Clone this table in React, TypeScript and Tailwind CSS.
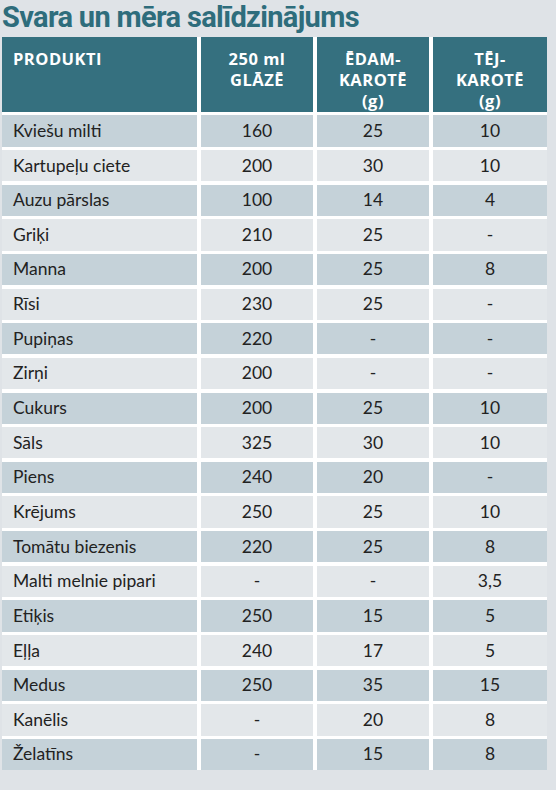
const rows: [string, string, string, string][] = [
  ['Kviešu milti', '160', '25', '10'],
  ['Kartupeļu ciete', '200', '30', '10'],
  ['Auzu pārslas', '100', '14', '4'],
  ['Griķi', '210', '25', '-'],
  ['Manna', '200', '25', '8'],
  ['Rīsi', '230', '25', '-'],
  ['Pupiņas', '220', '-', '-'],
  ['Zirņi', '200', '-', '-'],
  ['Cukurs', '200', '25', '10'],
  ['Sāls', '325', '30', '10'],
  ['Piens', '240', '20', '-'],
  ['Krējums', '250', '25', '10'],
  ['Tomātu biezenis', '220', '25', '8'],
  ['Malti melnie pipari', '-', '-', '3,5'],
  ['Etiķis', '250', '15', '5'],
  ['Eļļa', '240', '17', '5'],
  ['Medus', '250', '35', '15'],
  ['Kanēlis', '-', '20', '8'],
  ['Želatīns', '-', '15', '8'],
];

const head =
  "h-[75px] bg-[#35707f] text-white font-bold font-['Open_Sans',sans-serif] text-[16.5px] leading-[21px] tracking-[0.5px] pt-[11px]";

const App = () => {
  return (
    <div className="w-[556px] h-[790px] bg-[#dfe3e7] overflow-hidden">
      {/* Title */}
      <h1 className="h-[37px] pl-[2px] whitespace-nowrap text-[29px] leading-[35px] font-bold font-['Roboto',sans-serif] text-[#2e6d7c] tracking-[-0.65px]">
        Svara un mēra salīdzinājums
      </h1>

      {/* Table */}
      <div className="ml-[2px] w-[545px] grid grid-cols-[195px_112px_112px_114px] gap-x-[4px] gap-y-[3.4px] bg-white">
        <div className={`${head} pl-[11px]`}>PRODUKTI</div>
        <div className={`${head} text-center`}>
          250 ml
          <br />
          GLĀZĒ
        </div>
        <div className={`${head} text-center`}>
          ĒDAM-
          <br />
          KAROTĒ
          <br />
          (g)
        </div>
        <div className={`${head} text-center`}>
          TĒJ-
          <br />
          KAROTĒ
          <br />
          (g)
        </div>

        {rows.map((r, i) => {
          const bg = i % 2 === 0 ? 'bg-[#c5d2d9]' : 'bg-[#e3e7ea]';
          const cell = `${bg} h-[31.25px] flex items-center font-['Lato',sans-serif] text-[17.5px] text-[#222]`;
          return (
            <div key={r[0]} className="contents">
              <div className={`${cell} pl-[11px]`}>{r[0]}</div>
              <div className={`${cell} justify-center`}>{r[1]}</div>
              <div className={`${cell} justify-center`}>{r[2]}</div>
              <div className={`${cell} justify-center`}>{r[3]}</div>
            </div>
          );
        })}
      </div>
    </div>
  );
};

export default App;
